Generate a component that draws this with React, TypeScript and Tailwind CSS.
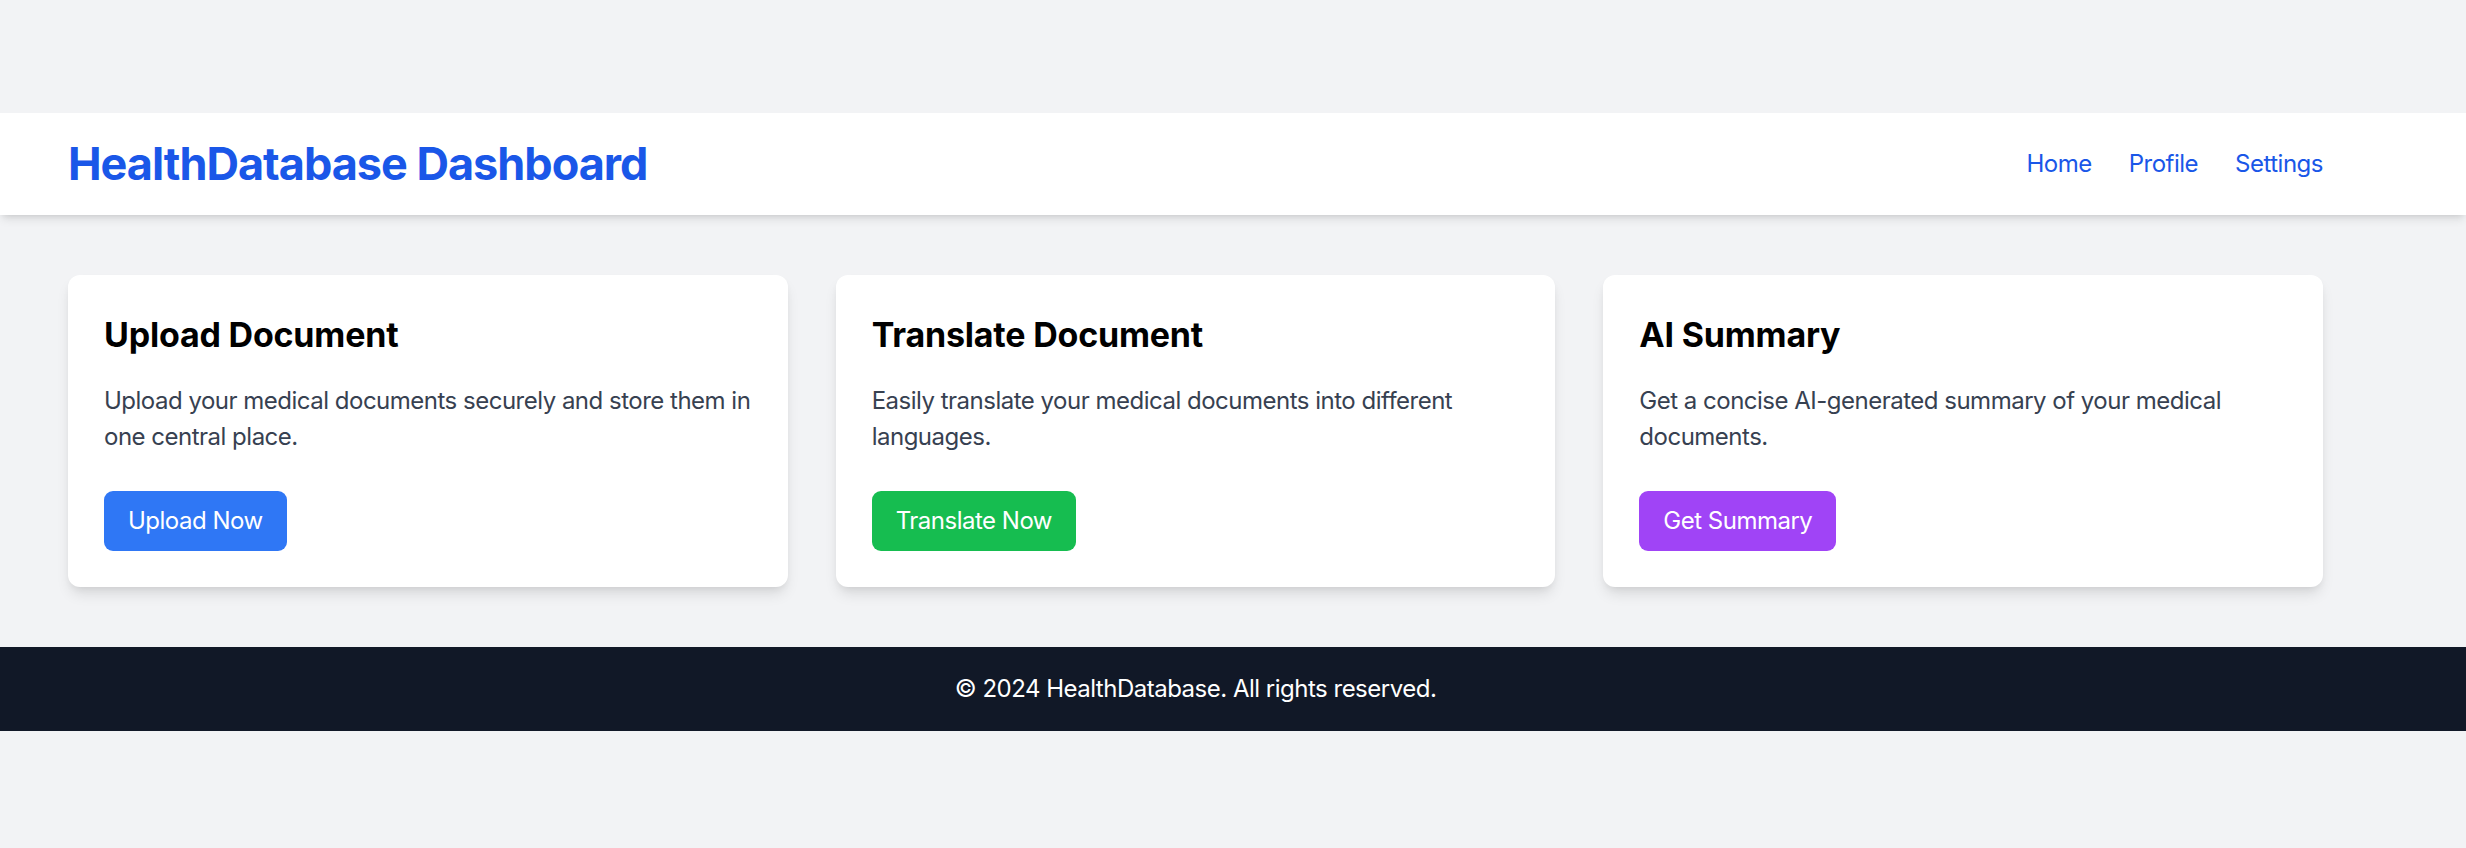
const cards = [
  {
    title: 'Upload Document',
    text: 'Upload your medical documents securely and store them in one central place.',
    action: 'Upload Now',
    btn: 'bg-[#2f77f5]',
  },
  {
    title: 'Translate Document',
    text: 'Easily translate your medical documents into different languages.',
    action: 'Translate Now',
    btn: 'bg-[#16bd50]',
  },
  {
    title: 'AI Summary',
    text: 'Get a concise AI-generated summary of your medical documents.',
    action: 'Get Summary',
    btn: 'bg-[#a044f6]',
  },
]

const links = ['Home', 'Profile', 'Settings']

export default function App() {
  return (
    <div className="min-h-screen bg-[#f2f3f5] pt-[113px] font-['Inter',sans-serif] tracking-[-0.5px]">
      <header className="bg-white shadow-[0_6px_9px_-2px_rgba(0,0,0,0.1),0_3px_6px_-3px_rgba(0,0,0,0.1)]">
        <div className="flex items-center justify-between pl-[68px] pr-[143px] py-6">
          <h1 className="text-[45px] leading-[54px] font-bold tracking-[-1px] text-[#1a57e8]">
            HealthDatabase Dashboard
          </h1>
          <nav className="flex gap-[37px]">
            {links.map((l) => (
              <a key={l} href="#" className="text-[24px] leading-[36px] text-[#1a57e8]">
                {l}
              </a>
            ))}
          </nav>
        </div>
      </header>

      <main className="pl-[68px] pr-[143px] py-[60px]">
        <div className="grid grid-cols-3 gap-[48px]">
          {cards.map((c) => (
            <div
              key={c.title}
              className="rounded-[12px] bg-white p-[36px] shadow-[0_9px_14px_-2px_rgba(0,0,0,0.1),0_4px_8px_-4px_rgba(0,0,0,0.1)]"
            >
              <h2 className="mb-[24px] text-[34px] leading-[48px] font-bold tracking-[-0.2px] text-black">
                {c.title}
              </h2>
              <p className="mb-[36px] text-[24px] leading-[36px] text-[#374151]">{c.text}</p>
              <button
                type="button"
                className={`${c.btn} rounded-[9px] px-[24px] py-[12px] text-[24px] leading-[36px] text-white`}
              >
                {c.action}
              </button>
            </div>
          ))}
        </div>
      </main>

      <footer className="bg-[#111827] py-6">
        <div className="pl-[68px] pr-[143px] text-center text-[24px] leading-[36px] text-white">
          © 2024 HealthDatabase. All rights reserved.
        </div>
      </footer>
    </div>
  )
}
